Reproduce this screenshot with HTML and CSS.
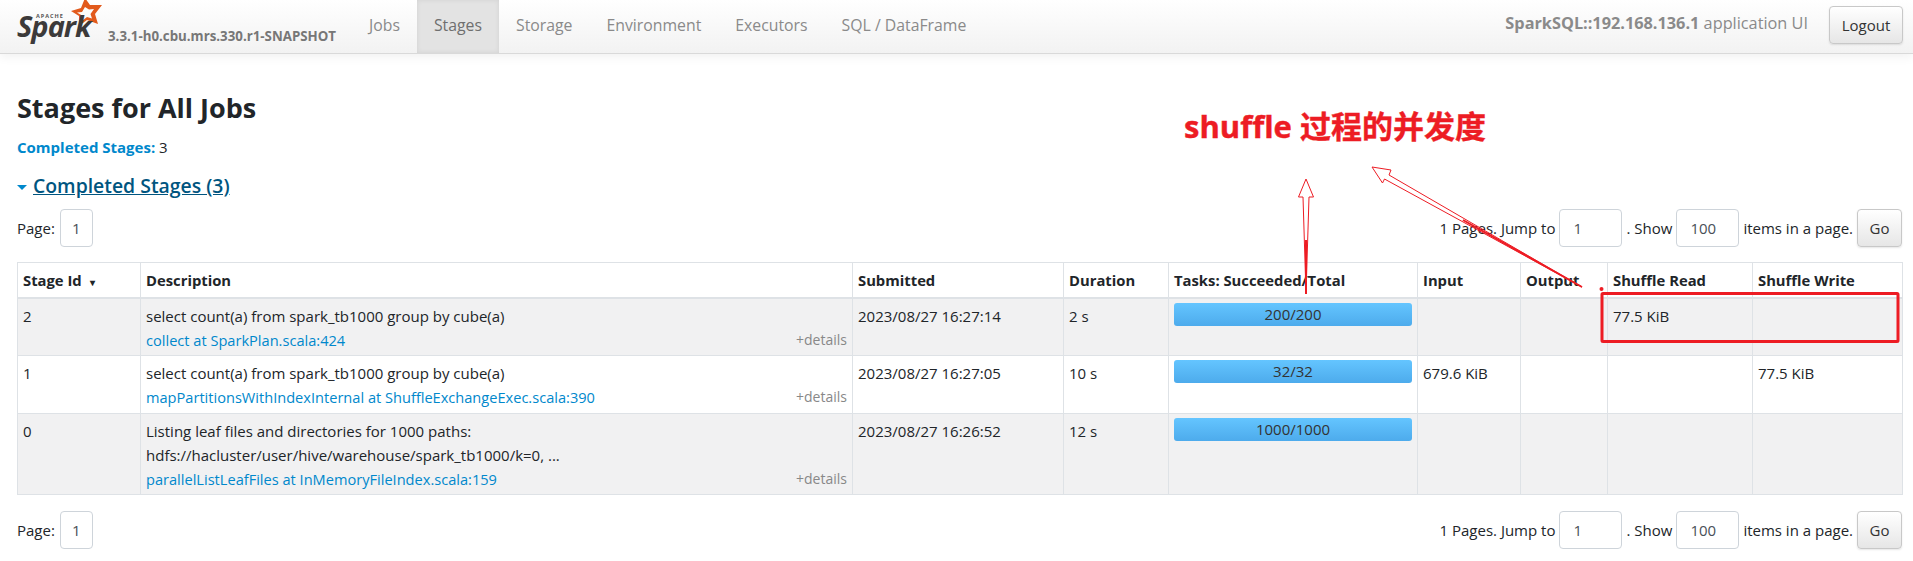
FILE: index.html
```html
<!DOCTYPE html>
<html lang="en">
<head>
<meta charset="utf-8">
<title>Stages for All Jobs</title>
<link rel="stylesheet" href="styles.css">
</head>
<body>
<nav class="navbar">
  <div class="brand">
    <svg class="logo" width="88" height="46" viewBox="0 0 88 46">
      <path class="logo-star" fill-rule="evenodd" d="M68 -2 L73 5 L85 5 L78 14 L81 24 L70 20 L62 26 L62 16 L54 11 L64 8 Z M68 7 L65 12 L60 12.500 L65 15.500 L65.500 20.500 L70 17 L75 18.500 L73.500 14 L77 9 L72 9.500 Z"/>
      <text class="logo-apache" x="19" y="18">APACHE</text>
      <text class="logo-word" x="0" y="37">Spark</text>
    </svg>
    <span class="version">3.3.1-h0.cbu.mrs.330.r1-SNAPSHOT</span>
  </div>
  <ul class="tabs">
    <li class="tab">Jobs</li>
    <li class="tab active">Stages</li>
    <li class="tab">Storage</li>
    <li class="tab">Environment</li>
    <li class="tab">Executors</li>
    <li class="tab">SQL / DataFrame</li>
  </ul>
  <div class="nav-right">
    <span class="app-name"><strong>SparkSQL::192.168.136.1</strong> application UI</span>
    <button class="btn logout">Logout</button>
  </div>
</nav>

<main class="content">
  <h3 class="title">Stages for All Jobs</h3>
  <p class="summary"><strong>Completed Stages:</strong> 3</p>
  <h4 class="collapse-head"><span class="caret"></span><a class="collapse-link">Completed Stages (3)</a></h4>

  <div class="pager">
    <div class="pager-left"><span>Page:</span><span class="page-box">1</span></div>
    <div class="pager-right">
      <span>1 Pages. Jump to</span><span class="field">1</span>
      <span>. Show</span><span class="field">100</span>
      <span>items in a page.</span><button class="btn go">Go</button>
    </div>
  </div>

  <table class="stages">
    <colgroup>
      <col class="c-id"><col class="c-desc"><col class="c-sub"><col class="c-dur"><col class="c-task"><col class="c-in"><col class="c-out"><col class="c-read"><col class="c-write">
    </colgroup>
    <thead>
      <tr><th>Stage Id <span class="sort">▾</span></th><th>Description</th><th>Submitted</th><th>Duration</th><th>Tasks: Succeeded/Total</th><th>Input</th><th>Output</th><th>Shuffle Read</th><th>Shuffle Write</th></tr>
    </thead>
    <tbody>
      <tr class="odd">
        <td>2</td>
        <td><div class="desc"><div>select count(a) from spark_tb1000 group by cube(a)</div><div class="last"><a class="link">collect at SparkPlan.scala:424</a><span class="details">+details</span></div></div></td>
        <td>2023/08/27 16:27:14</td><td>2 s</td>
        <td><div class="bar">200/200</div></td>
        <td></td><td></td><td>77.5 KiB</td><td></td>
      </tr>
      <tr class="tall">
        <td>1</td>
        <td><div class="desc"><div>select count(a) from spark_tb1000 group by cube(a)</div><div class="last"><a class="link">mapPartitionsWithIndexInternal at ShuffleExchangeExec.scala:390</a><span class="details">+details</span></div></div></td>
        <td>2023/08/27 16:27:05</td><td>10 s</td>
        <td><div class="bar">32/32</div></td>
        <td>679.6 KiB</td><td></td><td></td><td>77.5 KiB</td>
      </tr>
      <tr class="odd">
        <td>0</td>
        <td><div class="desc"><div>Listing leaf files and directories for 1000 paths:</div><div>hdfs://hacluster/user/hive/warehouse/spark_tb1000/k=0, ...</div><div class="last"><a class="link">parallelListLeafFiles at InMemoryFileIndex.scala:159</a><span class="details">+details</span></div></div></td>
        <td>2023/08/27 16:26:52</td><td>12 s</td>
        <td><div class="bar">1000/1000</div></td>
        <td></td><td></td><td></td><td></td>
      </tr>
    </tbody>
  </table>

  <div class="pager pager-bottom">
    <div class="pager-left"><span>Page:</span><span class="page-box">1</span></div>
    <div class="pager-right">
      <span>1 Pages. Jump to</span><span class="field">1</span>
      <span>. Show</span><span class="field">100</span>
      <span>items in a page.</span><button class="btn go">Go</button>
    </div>
  </div>
</main>

<div class="note">shuffle 过程的并发度</div>
<svg class="marks" width="1913" height="561" viewBox="0 0 1913 561">
  <path class="thin" d="M1306 294 L1303 197 L1298.500 197 L1306 179 L1313.500 197 L1309 197 L1306 294 Z"/>
  <path class="thin" d="M1582 287 L1389 175 L1391 170 L1372 167 L1382.500 183 L1384.500 179 Z"/>
  <path class="thick" d="M1582 287 L1463 220"/>
  <path class="thick" d="M1306 294 L1306 240"/>
  <rect class="box" x="1602" y="293.500" width="296" height="48" rx="1"/>
  <circle class="dot" cx="1601.500" cy="289" r="2"/>
</svg>
</body>
</html>
```
FILE: styles.css
```css
* { box-sizing: border-box; }
html, body { margin: 0; padding: 0; }
body {
  position: relative;
  width: 1913px;
  height: 561px;
  overflow: hidden;
  background: #fff;
  color: #212529;
  font-family: "Open Sans", "Noto Sans", sans-serif;
  font-size: 15px;
  line-height: 24px;
}
.navbar {
  display: flex;
  align-items: stretch;
  height: 54px;
  padding: 0 10px 0 17px;
  background: linear-gradient(#ffffff, #f2f2f2);
  border-bottom: 1px solid #d9d9d9;
  box-shadow: 0 3px 10px rgba(0, 0, 0, 0.06);
}
.brand { display: flex; align-items: flex-start; width: 335px; }
.logo { display: block; flex: none; width: 88px; height: 46px; overflow: hidden; }
.logo-star { fill: #e25a1c; }
.logo-apache { font: 700 5.500px "Open Sans", sans-serif; letter-spacing: 1px; fill: #555; }
.logo-word { font: italic 700 29px "Open Sans", sans-serif; letter-spacing: -1px; fill: #3c3a3a; }
.version {
  margin: 25px 0 0 3px;
  font-size: 13.300px;
  line-height: 22px;
  font-weight: 700;
  color: #777;
  white-space: nowrap;
}
.tabs { display: flex; margin: 0; padding: 0; list-style: none; }
.tab {
  padding: 0 17px;
  font-size: 15.800px;
  line-height: 50px;
  color: #8a8a8a;
  white-space: nowrap;
}
.tab.active {
  background: #e3e3e3;
  color: #6f6f6f;
  box-shadow: inset 0 0 5px rgba(0, 0, 0, 0.08);
}
.nav-right { display: flex; align-items: flex-start; margin-left: auto; }
.app-name { margin-top: 11px; color: #8a8a8a; font-size: 16.300px; white-space: nowrap; }
.btn {
  border: 1px solid #c8c8c8;
  border-radius: 4px;
  background: linear-gradient(#ffffff, #e6e6e6);
  color: #333;
  font: inherit;
  box-shadow: 0 1px 2px rgba(0, 0, 0, 0.1);
}
.logout { width: 74px; height: 38px; margin: 6px 0 0 21px; }
.content { padding: 0 11px 0 17px; }
.title {
  margin: 35px 0 0;
  font-size: 27px;
  line-height: 38px;
  font-weight: 700;
}
.summary { margin: 8px 0 0; line-height: 24px; }
.summary strong { color: #0088cc; }
.collapse-head {
  display: flex;
  align-items: center;
  margin: 14px 0 0;
  font-size: 19.400px;
  line-height: 26px;
  font-weight: 600;
}
.caret {
  width: 0;
  height: 0;
  margin: 3px 6px 0 0;
  border: 5px solid transparent;
  border-top: 5px solid #0088cc;
  border-bottom: 0;
}
.collapse-link { color: #005580; text-decoration: underline; }
.pager {
  display: flex;
  justify-content: space-between;
  align-items: center;
  height: 38px;
  margin-top: 10px;
}
.pager-bottom { margin-top: 16px; }
.pager-left, .pager-right { display: flex; align-items: center; gap: 4px; }
.pager-left { gap: 5px; }
.page-box, .field {
  display: flex;
  align-items: center;
  height: 38px;
  border: 1px solid #ced4da;
  border-radius: 4px;
  background: #fff;
  color: #495057;
}
.page-box { justify-content: center; width: 33px; }
.field { width: 63px; padding-left: 13px; }
.go { width: 45px; height: 38px; }
.stages {
  width: 1885px;
  margin-top: 15px;
  table-layout: fixed;
  border-collapse: collapse;
  border: 1px solid #dee2e6;
}
.c-id { width: 123px; }
.c-desc { width: 712px; }
.c-sub { width: 211px; }
.c-dur { width: 105px; }
.c-task { width: 249px; }
.c-in { width: 103px; }
.c-out { width: 87px; }
.c-read { width: 145px; }
.c-write { width: 150px; }
.stages th, .stages td {
  padding: 5px 5px 3px;
  border: 1px solid #dee2e6;
  text-align: left;
  vertical-align: top;
  white-space: nowrap;
}
.stages th {
  height: 35px;
  padding-top: 5px;
  border-bottom: 2px solid #dee2e6;
  font-size: 14.800px;
  font-weight: 700;
}
.stages tr.tall td { height: 58px; }
.sort { font-size: 10px; margin-left: 4px; }
.stages tr.odd td { background: #f1f1f2; }
.desc { position: relative; }
.link { color: #0088cc; font-size: 14.600px; }
.details {
  position: absolute;
  right: 0;
  bottom: 0;
  color: #888;
  font-size: 14px;
}
.bar {
  height: 23px;
  margin-top: -1px;
  border-radius: 3px;
  background: linear-gradient(#64c5ff, #4dabec);
  color: #333;
  line-height: 23px;
  text-align: center;
}
.note {
  position: absolute;
  left: 1184px;
  top: 106px;
  color: #ed1c24;
  font-family: "Open Sans", "Noto Sans CJK SC", sans-serif;
  font-size: 31px;
  line-height: 40px;
  font-weight: 700;
  white-space: nowrap;
  -webkit-text-stroke: 0.4px #ed1c24;
}
.marks { position: absolute; left: 0; top: 0; pointer-events: none; }
.thin { fill: none; stroke: #ed1c24; stroke-width: 1; }
.thick { fill: none; stroke: #ed1c24; stroke-width: 2; }
.box { fill: none; stroke: #ed1c24; stroke-width: 3; }
.dot { fill: #ed1c24; }
```
